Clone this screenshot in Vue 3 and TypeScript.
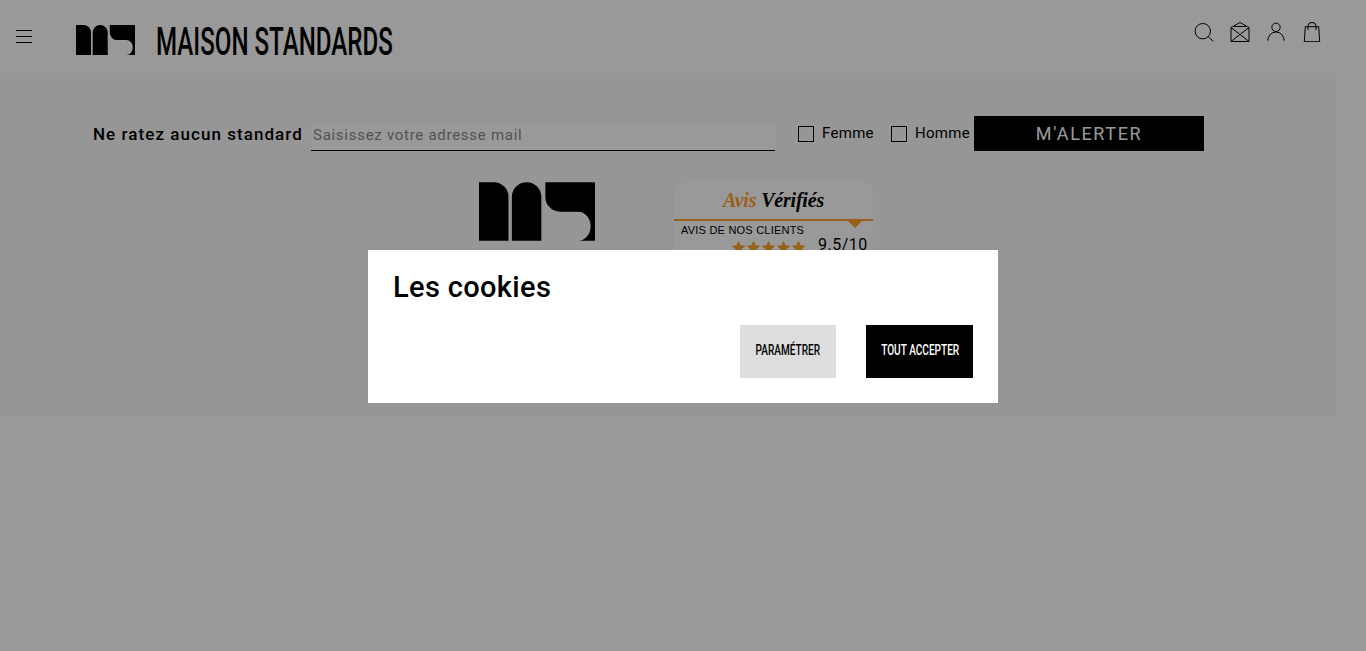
<script setup lang="ts">
const stars: number[] = [0, 1, 2, 3, 4];
const genders: string[] = ["Femme", "Homme"];
</script>

<template>
  <div class="page">
    <header class="header">
      <div class="left">
        <button class="burger" aria-label="Menu"><span></span><span></span><span></span></button>
        <svg class="logo" viewBox="0 0 346 175" aria-hidden="true">
          <path d="M0 175V0H44A44 44 0 0 1 88 44V175Z" />
          <path d="M98 175V44A44 44 0 0 1 186 44V175Z" />
          <path d="M198 0H346V175H296A37 43.500 0 0 0 296 88H242A44 44 0 0 1 198 44Z" />
        </svg>
        <span class="brand">MAISON STANDARDS</span>
      </div>
      <div class="icons">
        <svg viewBox="0 0 20 20" class="ico"><circle cx="8.8" cy="9.2" r="7.7" /><path d="M14.300 14.800l5 4.400" /></svg>
        <svg viewBox="0 0 20 20" class="ico"><path d="M1 19.500V5.500L10 .5l9 5v14ZM1 5.500l18 14M19 5.500l-18 14M3 4.500h14" /></svg>
        <svg viewBox="0 0 20 20" class="ico"><circle cx="10" cy="5.300" r="4.200" /><path d="M1.800 18.700A8.200 8.700 0 0 1 18.200 18.700" /></svg>
        <svg viewBox="0 0 20 20" class="ico"><path d="M3.300 4.700h13.400l1 15H2.300ZM6 8V4a4 3.600 0 0 1 8 0v4" /></svg>
      </div>
    </header>

    <section class="footer">
      <form class="news" @submit.prevent>
        <span class="news-label">Ne ratez aucun standard</span>
        <div class="field">Saisissez votre adresse mail</div>
        <label v-for="g in genders" :key="g" class="check"><i class="box"></i>{{ g }}</label>
        <button class="alert">M'ALERTER</button>
      </form>
      <div class="badges">
        <svg class="logo-big" viewBox="0 0 346 175" aria-hidden="true">
          <path d="M0 175V0H44A44 44 0 0 1 88 44V175Z" />
          <path d="M98 175V44A44 44 0 0 1 186 44V175Z" />
          <path d="M198 0H346V175H296A37 43.500 0 0 0 296 88H242A44 44 0 0 1 198 44Z" />
        </svg>
        <div class="card">
          <div class="card-title"><span class="orange">Avis</span> <span>Vérifiés</span></div>
          <div class="rule"><i class="tri"></i></div>
          <div class="card-sub">AVIS DE NOS CLIENTS</div>
          <div class="score">
            <span class="stars">
              <svg v-for="s in stars" :key="s" viewBox="0 0 24 24" class="star"><path d="M12 1l3.400 7.400 7.600.9-5.700 5.200 1.600 8L12 18.400 5.100 22.500l1.600-8L1 9.300l7.600-.9Z" /></svg>
            </span>
            <span class="num">9.5/10</span>
          </div>
        </div>
      </div>
    </section>

    <div class="overlay">
      <div class="modal">
        <h2 class="modal-title">Les cookies</h2>
        <div class="actions">
          <button class="btn light"><span class="squeeze">PARAMÉTRER</span></button>
          <button class="btn dark"><span class="squeeze">TOUT ACCEPTER</span></button>
        </div>
      </div>
    </div>
  </div>
</template>

<style>
html, body { margin: 0; background: #fff; }
</style>

<style scoped>
.page { width: 1366px; height: 651px; overflow: hidden; font-family: Roboto, "Liberation Sans", sans-serif; color: #000; }
.header { height: 73px; display: flex; justify-content: space-between; box-sizing: border-box; }
.left { display: flex; align-items: flex-start; padding: 25px 0 0 16px; }
.burger { width: 16px; height: 13px; margin-top: 5px; padding: 0; border: 0; background: none; display: flex; flex-direction: column; justify-content: space-between; }
.burger span { display: block; height: 1px; background: #000; }
.logo { width: 59px; height: 30px; margin-left: 44px; fill: #000; }
.brand { display: inline-block; margin-left: 21px; margin-top: 1px; font: 500 38px/32px Roboto, sans-serif; white-space: nowrap; transform: scaleX(.635); transform-origin: left center; }
.icons { display: flex; gap: 16px; padding: 22px 44px 0 0; }
.ico { width: 20px; height: 20px; fill: none; stroke: #000; stroke-width: 1; }
.footer { width: 1336px; height: 344px; background: #fafafa; box-sizing: border-box; padding-top: 43px; }
.news { display: flex; align-items: flex-start; padding-left: 93px; height: 35px; }
.news-label { font-size: 17px; font-weight: 500; letter-spacing: 1.050px; line-height: 36px; width: 218px; white-space: nowrap; }
.field { height: 28px; margin-top: 6px; background: #fff; border-bottom: 1px solid #000; font-size: 15px; letter-spacing: .72px; line-height: 27px; color: #8a8a8a; padding-left: 2px; width: 462px; margin-right: 23px; }
.check { display: flex; align-items: center; height: 34px; font-size: 15px; letter-spacing: .3px; width: 93px; }
.check:last-of-type { width: 83px; }
.box { width: 14px; height: 14px; border: 1px solid #000; margin-right: 8px; margin-top: 1px; }
.alert { width: 230px; height: 35px; border: 0; background: #000; color: #fff; font: 400 18px Roboto, sans-serif; letter-spacing: 1.600px; padding-bottom: 2px; }
.badges { display: flex; align-items: flex-start; padding: 31px 0 0 479px; }
.logo-big { width: 116px; height: 59px; fill: #000; flex: none; }
.card { width: 199px; height: 90px; margin-left: 79px; background: #fff; border-radius: 12px 12px 0 0; }
.card-title { height: 37px; text-align: center; font: italic 700 20px/36px "Liberation Serif", serif; letter-spacing: -.2px; }
.orange { color: #ffa030; }
.rule { position: relative; height: 2px; background: #ffa030; }
.tri { position: absolute; right: 11px; top: 2px; border: 7px solid transparent; border-top-color: #ffa030; border-bottom: 0; }
.card-sub { font: 11px/19px "Liberation Sans", sans-serif; letter-spacing: .22px; padding-left: 7px; }
.score { display: flex; align-items: flex-start; padding-left: 57px; margin-top: -5px; }
.stars { display: flex; width: 87px; padding-top: 5px; }
.star { width: 15px; height: 15px; fill: #ffa030; }
.num { font-size: 16px; line-height: 20px; letter-spacing: .5px; }
.overlay { position: fixed; inset: 0; background: rgba(0, 0, 0, .4); display: flex; align-items: center; justify-content: center; padding-top: 2px; box-sizing: border-box; }
.modal { width: 630px; height: 153px; background: #fff; box-sizing: border-box; padding: 20px 25px 25px; display: flex; flex-direction: column; justify-content: space-between; }
.modal-title { margin: 0; font-size: 29px; font-weight: 500; letter-spacing: .35px; line-height: 34px; }
.actions { display: flex; justify-content: flex-end; gap: 30px; }
.btn { height: 53px; border: 0; padding: 0 0 4px; font: 500 14px Roboto, sans-serif; white-space: nowrap; }
.squeeze { display: inline-block; transform: scaleX(.72); }
.light { width: 96px; background: #ddd; color: #000; }
.dark { width: 107px; background: #000; color: #fff; }
</style>
